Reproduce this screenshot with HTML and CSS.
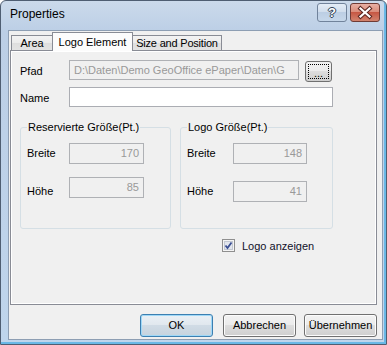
FILE: index.html
```html
<!DOCTYPE html>
<html lang="de">
<head>
  <meta charset="UTF-8" />
  <title>Properties</title>
  <link rel="stylesheet" href="styles.css">
</head>
<body>
  <div class="window">
    <div class="titlebar">
      <span class="title">Properties</span>
      <div class="caption-buttons">
        <div class="cap-btn help">?</div>
        <div class="cap-btn close">
          <svg width="28" height="17" viewBox="0 0 28 17">
            <path d="M9.5 4.5 L18.5 12.5 M18.5 4.5 L9.5 12.5" stroke="#5a2520" stroke-width="4.2" stroke-linecap="square" fill="none"/>
            <path d="M9.5 4.5 L18.5 12.5 M18.5 4.5 L9.5 12.5" stroke="#fff" stroke-width="2.2" stroke-linecap="square" fill="none"/>
          </svg>
        </div>
      </div>
    </div>

    <div class="client">
      <div class="tabs">
        <div class="tab tab-area">Area</div>
        <div class="tab tab-logo active">Logo Element</div>
        <div class="tab tab-size">Size and Position</div>
      </div>

      <div class="panel">
        <div class="row row-path">
          <span class="lbl">Pfad</span>
          <div class="field disabled path">D:\Daten\Demo GeoOffice ePaper\Daten\G</div>
          <div class="browse"><span class="focus">...</span></div>
        </div>
        <div class="row row-name">
          <span class="lbl">Name</span>
          <div class="field name"></div>
        </div>

        <div class="groups">
          <fieldset class="group group-reserved">
            <legend>Reservierte Größe(Pt.)</legend>
            <div class="frow">
              <span class="glbl">Breite</span>
              <div class="field disabled num">170</div>
            </div>
            <div class="frow second">
              <span class="glbl">Höhe</span>
              <div class="field disabled num">85</div>
            </div>
          </fieldset>
          <fieldset class="group group-logo">
            <legend>Logo Größe(Pt.)</legend>
            <div class="frow">
              <span class="glbl">Breite</span>
              <div class="field disabled num">148</div>
            </div>
            <div class="frow second">
              <span class="glbl">Höhe</span>
              <div class="field disabled num">41</div>
            </div>
          </fieldset>
        </div>

        <div class="check-row">
          <span class="checkbox">
            <svg width="13" height="13" viewBox="0 0 13 13">
              <rect x="0.5" y="0.5" width="12" height="12" fill="#f4f4f4" stroke="#8f8f8f"/>
              <rect x="2.5" y="2.5" width="8" height="8" fill="#e2e6ee" stroke="#c3c8d2"/>
              <path d="M3.5 6.5 L5.5 9 L9.5 3.5" stroke="#3b4f93" stroke-width="1.8" fill="none"/>
            </svg>
          </span>
          <span class="check-text">Logo anzeigen</span>
        </div>
      </div>

      <div class="buttons">
        <div class="btn default">OK</div>
        <div class="btn cancel">Abbrechen</div>
        <div class="btn">Übernehmen</div>
      </div>
    </div>
  </div>
</body>
</html>
```

FILE: styles.css
```css
* { margin: 0; padding: 0; box-sizing: border-box; }
body {
  background: #fff;
  font-family: "Liberation Sans", Arial, sans-serif;
  font-size: 11px;
  line-height: 13px;
  color: #000;
}

/* window frame */
.window {
  width: 387px;
  height: 345px;
  display: flex;
  flex-direction: column;
  padding: 0 3px 4px 7px;
  background: linear-gradient(#cbdaeb, #bccfe6 30px, #bfd5ec);
  border: 1px solid #4f5e72;
  border-radius: 6px 6px 0 0;
  box-shadow: inset -2px -2px 0 #69b8e6;
}
.titlebar {
  height: 29px;
  display: flex;
  justify-content: space-between;
  align-items: flex-start;
  padding: 0 3px 0 2px;
}
.title { font-size: 12px; line-height: 14px; padding-top: 6px; }
.caption-buttons { display: flex; gap: 3px; padding-top: 2px; }
.cap-btn {
  width: 30px;
  height: 19px;
  border-radius: 3px;
  display: flex;
  justify-content: center;
  align-items: center;
}
.help {
  border: 1px solid #71839b;
  background: linear-gradient(#e4edf7, #cfdcec 50%, #bccee4 50%, #c6d7ea);
  color: #fff;
  font-weight: bold;
  font-size: 13px;
  text-shadow: 0 0 1px #34445a, 1px 0 0 #34445a, -1px 0 0 #34445a, 0 1px 0 #34445a, 0 -1px 0 #34445a;
}
.close {
  border: 1px solid #6f3b35;
  background: linear-gradient(#e8b0a4, #d98977 50%, #c75844 50%, #d2836e);
}

/* client area */
.client {
  flex: 1;
  display: flex;
  flex-direction: column;
  background: #f0f0f0;
  border: 1px solid #8d9eb3;
  padding-top: 1px;
}

.tabs { display: flex; align-items: flex-start; margin-left: 2px; height: 18px; }
.tab {
  height: 15px;
  margin-top: 3px;
  padding-top: 1px;
  text-align: center;
  white-space: nowrap;
  border: 1px solid #898c95;
  border-bottom: none;
  background: linear-gradient(#f3f3f3, #ebebeb 50%, #dedede 50%, #e3e3e3);
}
.tab + .tab { margin-left: -1px; }
.tab-area { width: 42px; }
.tab-logo { width: 81px; }
.tab-size { width: 90px; letter-spacing: -0.2px; }
.tab.active {
  position: relative;
  z-index: 1;
  height: 19px;
  margin-top: 0;
  padding-top: 3px;
  background: #fcfcfc;
}

.panel {
  width: 367px;
  height: 255px;
  margin-left: 1px;
  border: 1px solid #898c95;
  box-shadow: inset 0 0 0 1px #fff;
  padding: 9px 0 0 9px;
}

.row { display: flex; align-items: flex-start; height: 20px; }
.row-name { margin-top: 7px; }
.lbl { width: 49px; padding-top: 5px; }

.field {
  height: 20px;
  border: 1px solid #abadb3;
  background: #fff;
  padding: 3px 4px 0;
  white-space: nowrap;
  overflow: hidden;
}
.field.disabled { background: #f0f0f0; border-color: #afb1b5; color: #999; }
.path { width: 230px; }
.name { width: 264px; }

.browse {
  width: 27px;
  height: 21px;
  margin: 1px 0 0 6px;
  border: 1px solid #707070;
  border-radius: 3px;
  background: linear-gradient(#f2f2f2, #ebebeb 50%, #dddddd 50%, #cfcfcf);
  padding: 2px;
}
.focus {
  display: block;
  height: 15px;
  border: 1px dotted #000;
  text-align: center;
  line-height: 16px;
}

/* group boxes */
.groups { display: flex; margin-top: 14px; }
.group {
  height: 108px;
  border: 1px solid #d5dfe5;
  border-radius: 3px;
  padding: 9px 0 0 6px;
}
.group legend { padding: 0 1px; line-height: 13px; }
.group-reserved { width: 151px; }
.group-logo { width: 153px; margin-left: 9px; }

.frow { display: flex; align-items: flex-start; }
.frow .field { height: 21px; text-align: right; padding: 3px 4px 0; }
.glbl { padding-top: 4px; }
.group-reserved .glbl { width: 42px; }
.group-reserved .field { width: 75px; }
.group-logo .glbl { width: 46px; }
.group-logo .field { width: 74px; }
.group-reserved .second { margin-top: 13px; }
.group-reserved .second .glbl { padding-top: 8px; }
.group-logo .second { margin-top: 17px; }

.check-row { display: flex; align-items: center; margin-top: 10px; padding-left: 202px; height: 13px; }
.checkbox { width: 13px; height: 13px; display: block; }
.checkbox svg { display: block; }
.check-text { margin-left: 7px; padding-top: 2px; color: #10102a; }

/* dialog buttons */
.buttons { display: flex; justify-content: flex-end; margin-top: 9px; padding-right: 5px; }
.btn {
  width: 73px;
  height: 23px;
  border: 1px solid #707070;
  border-radius: 3px;
  background: linear-gradient(#f2f2f2, #ebebeb 50%, #dddddd 50%, #cfcfcf);
  box-shadow: inset 0 0 0 1px #fcfcfc;
  text-align: center;
  line-height: 20px;
}
.btn.default {
  margin-right: 10px;
  border-color: #3c7fb1;
  background: linear-gradient(#eaf0f5, #e0e7ee 50%, #d0dbe5 50%, #c6d3de);
  box-shadow: inset 0 0 0 1px #9fd8f7;
}
.btn.cancel { margin-right: 8px; }
```
